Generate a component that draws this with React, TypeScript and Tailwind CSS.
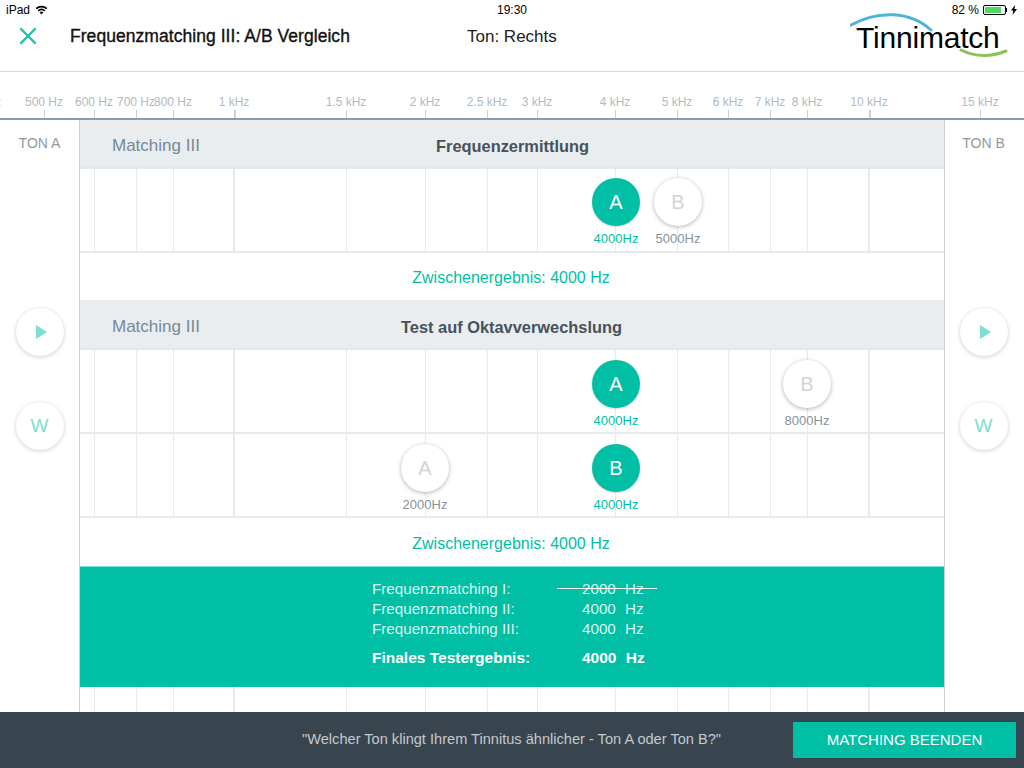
import { X } from 'lucide-react';

const axisLabels = [
  { x: -18, label: '400 Hz' },
  { x: 44, label: '500 Hz' },
  { x: 94, label: '600 Hz' },
  { x: 136, label: '700 Hz' },
  { x: 173, label: '800 Hz' },
  { x: 234, label: '1 kHz', major: true },
  { x: 346, label: '1.5 kHz' },
  { x: 425, label: '2 kHz' },
  { x: 487, label: '2.5 kHz' },
  { x: 537, label: '3 kHz' },
  { x: 615, label: '4 kHz' },
  { x: 677, label: '5 kHz' },
  { x: 728, label: '6 kHz' },
  { x: 770, label: '7 kHz' },
  { x: 807, label: '8 kHz' },
  { x: 869, label: '10 kHz', major: true },
  { x: 980, label: '15 kHz' },
];

const gridLines = axisLabels.filter((a) => a.x > 80 && a.x < 944);

function GridLines() {
  return (
    <>
      {gridLines.map((l) => (
        <div
          key={l.x}
          className={`absolute top-0 bottom-0 bg-[#e6eaee] ${l.major ? 'w-[2px]' : 'w-px'}`}
          style={{ left: l.x - (l.major ? 81 : 80) }}
        />
      ))}
    </>
  );
}

function Marker({ x, top, letter, hz, active }: { x: number; top: number; letter: string; hz: string; active?: boolean }) {
  return (
    <div className="absolute flex w-[60px] flex-col items-center" style={{ left: x - 80 - 30, top }}>
      <div
        className={`flex h-[48px] w-[48px] items-center justify-center rounded-full text-[20px] ${
          active
            ? 'bg-[#00bfa5] text-white shadow-[0_1px_2px_rgba(0,0,0,0.15)]'
            : 'bg-white text-[#d2d5d7] shadow-[0_1px_4px_rgba(0,0,0,0.3)]'
        }`}
      >
        {letter}
      </div>
      <div className={`mt-[6px] text-[13px] leading-[14px] ${active ? 'text-[#00bfa5]' : 'text-[#87929b]'}`}>{hz}</div>
    </div>
  );
}

function Row({ children }: { children?: React.ReactNode }) {
  return (
    <div className="relative h-[84px] border-b-2 border-[#e6eaee]">
      <GridLines />
      {children}
    </div>
  );
}

function SectionHeader({ title, className, titleClass }: { title: string; className: string; titleClass: string }) {
  return (
    <div className={`relative flex items-center border-b-2 border-[#e3e8ec] bg-[#e9edf0] pl-[32px] ${className}`}>
      <span className="text-[17px] text-[#76899a]">Matching III</span>
      <span className={`absolute text-[16.4px] leading-[20px] font-bold text-[#46525c] ${titleClass}`}>{title}</span>
    </div>
  );
}

function Result({ className }: { className: string }) {
  return (
    <div className={`flex items-center justify-center pr-[2px] text-[16px] text-[#00bfa5] ${className}`}>
      Zwischenergebnis: 4000 Hz
    </div>
  );
}

function RoundButton({ children }: { children: React.ReactNode }) {
  return (
    <div className="flex h-[48px] w-[48px] items-center justify-center rounded-full bg-white shadow-[0_1px_4px_rgba(0,0,0,0.2)]">
      {children}
    </div>
  );
}

function SideColumn({ label, className }: { label: string; className?: string }) {
  return (
    <div className={`flex w-[79px] flex-col items-center pt-[15px] ${className ?? ''}`}>
      <div className="text-[14px] leading-[16px] text-[#8f999f]">{label}</div>
      <div className="mt-[157px]">
        <RoundButton>
          <svg width="11" height="14" viewBox="0 0 11 14" fill="#7fdecf" className="ml-[3px]">
            <path d="M0 0 11 7 0 14z" />
          </svg>
        </RoundButton>
      </div>
      <div className="mt-[46px]">
        <RoundButton>
          <span className="text-[19px] text-[#7fdecf]">W</span>
        </RoundButton>
      </div>
    </div>
  );
}

function ResultLine({ label, value, strike, bold }: { label: string; value: string; strike?: boolean; bold?: boolean }) {
  return (
    <div className={`flex h-[20px] items-center ${bold ? 'text-[15.5px] font-bold' : 'text-[15.2px] text-[#d9f5f0]'}`}>
      <div className="w-[185px]">{label}</div>
      <div className="relative w-[100px] pl-[25px] whitespace-pre [word-spacing:5px]">
        {value}
        {strike && <div className="absolute top-[10px] left-0 h-px w-[100px] bg-white" />}
      </div>
    </div>
  );
}

export default function App() {
  return (
    <div className="flex h-[768px] w-[1024px] flex-col overflow-hidden bg-white font-['Liberation_Sans',sans-serif]">
      {/* Header */}
      <header className="relative h-[72px] shrink-0 border-b border-[#d8dbdd]">
        <div className="flex h-[20px] items-center justify-between px-[6px] text-[12px] text-black">
          <div className="flex items-center gap-[5px]">
            iPad
            <svg width="13" height="10" viewBox="0 0 13 10" fill="#000">
              <path d="M6.5 9.6 4.6 7.4a2.8 2.8 0 0 1 3.8 0zM3.7 6.4 2.7 5.2a5.8 5.8 0 0 1 7.6 0L9.3 6.4a4.3 4.3 0 0 0-5.6 0zM1.8 4.2.6 2.9a8.9 8.9 0 0 1 11.8 0l-1.2 1.3a7.2 7.2 0 0 0-9.4 0z" />
            </svg>
          </div>
          <div className="absolute left-[497px]">19:30</div>
          <div className="flex items-center gap-[4px] pr-[1px]">
            82 %
            <div className="flex items-center">
              <div className="h-[10px] w-[23px] rounded-[2px] border border-black p-px">
                <div className="h-full w-[82%] bg-[#4cd964]" />
              </div>
              <div className="h-[4px] w-[1px] bg-black" />
            </div>
            <svg width="6" height="10" viewBox="0 0 6 10" fill="#000">
              <path d="M4 0 0 5.6h2.3L1.6 10 6 4H3.5z" />
            </svg>
          </div>
        </div>
        <div className="flex h-[32px] items-center">
          <X className="ml-[14px] h-[28px] w-[28px] text-[#1fc0a6]" strokeWidth={2.1} />
          <div className="ml-[28px] w-[397px] text-[17.5px] tracking-[0.05px] text-[#111] [-webkit-text-stroke:0.35px_#111]">
            Frequenzmatching III: A/B Vergleich
          </div>
          <div className="pt-[1px] text-[17px] text-[#222]">Ton: Rechts</div>
        </div>
        <div className="absolute top-[12px] left-[850px] w-[160px]">
          <div className="absolute top-[10px] left-[6px] text-[30px] leading-[32px] tracking-[-0.2px] text-black">Tinnimatch</div>
          <svg width="160" height="50" viewBox="0 0 160 50" fill="none" className="absolute top-0 left-0">
            <path d="M1 13C28 -2 60-1 81 18" stroke="#4fb4d8" strokeWidth="3" strokeLinecap="round" />
            <path d="M111 38c14 7 30 7 45 1" stroke="#8fc15a" strokeWidth="3" strokeLinecap="round" />
          </svg>
        </div>
      </header>

      {/* Frequency axis */}
      <div className="relative h-[48px] shrink-0 border-b-2 border-[#8c9dab]">
        {axisLabels.map((a) => (
          <div key={a.x} className="absolute top-0 bottom-0 w-0" style={{ left: a.x }}>
            <div className="absolute top-[23px] left-[-30px] w-[60px] text-center text-[12px] leading-[14px] whitespace-nowrap text-[#b0bac2]">
              {a.label}
            </div>
            <div className={`absolute bottom-0 left-0 h-[8px] bg-[#c9d0d6] ${a.major ? 'w-[2px]' : 'w-px'}`} />
          </div>
        ))}
      </div>

      {/* Main */}
      <div className="flex min-h-0 flex-1">
        <SideColumn label="TON A" />
        <div className="flex w-[866px] flex-col border-x border-[#c9cdd0]">
          <SectionHeader title="Frequenzermittlung" className="h-[49px] pt-[4px]" titleClass="top-[16px] left-[356px]" />
          <Row>
            <Marker x={616} top={9} letter="A" hz="4000Hz" active />
            <Marker x={678} top={9} letter="B" hz="5000Hz" />
          </Row>
          <Result className="h-[47px] pt-[2px]" />
          <SectionHeader title="Test auf Oktavverwechslung" className="h-[50px] pt-[5px]" titleClass="top-[17px] left-[321px]" />
          <Row>
            <Marker x={616} top={10} letter="A" hz="4000Hz" active />
            <Marker x={807} top={10} letter="B" hz="8000Hz" />
          </Row>
          <Row>
            <Marker x={425} top={10} letter="A" hz="2000Hz" />
            <Marker x={616} top={10} letter="B" hz="4000Hz" active />
          </Row>
          <Result className="h-[48px] pt-[4px]" />
          <div className="h-[121px] border-t border-[#7fdecf] bg-[#00bfa5] pt-[12px] pl-[292px] text-white">
            <ResultLine label="Frequenzmatching I:" value="2000 Hz" strike />
            <ResultLine label="Frequenzmatching II:" value="4000 Hz" />
            <ResultLine label="Frequenzmatching III:" value="4000 Hz" />
            <div className="mt-[9px]">
              <ResultLine label="Finales Testergebnis:" value="4000 Hz" bold />
            </div>
          </div>
          <div className="relative min-h-0 flex-1">
            <GridLines />
          </div>
        </div>
        <SideColumn label="TON B" className="pr-[2px]" />
      </div>

      {/* Footer */}
      <footer className="flex h-[56px] shrink-0 items-center justify-end bg-[#38454f] pr-[8px]">
        <div className="mr-[72px] text-[14.6px] text-[#c3c9cd]">"Welcher Ton klingt Ihrem Tinnitus ähnlicher - Ton A oder Ton B?"</div>
        <div className="flex h-[36px] w-[223px] items-center justify-center bg-[#00bfa5] text-[15px] text-white">MATCHING BEENDEN</div>
      </footer>
    </div>
  );
}
